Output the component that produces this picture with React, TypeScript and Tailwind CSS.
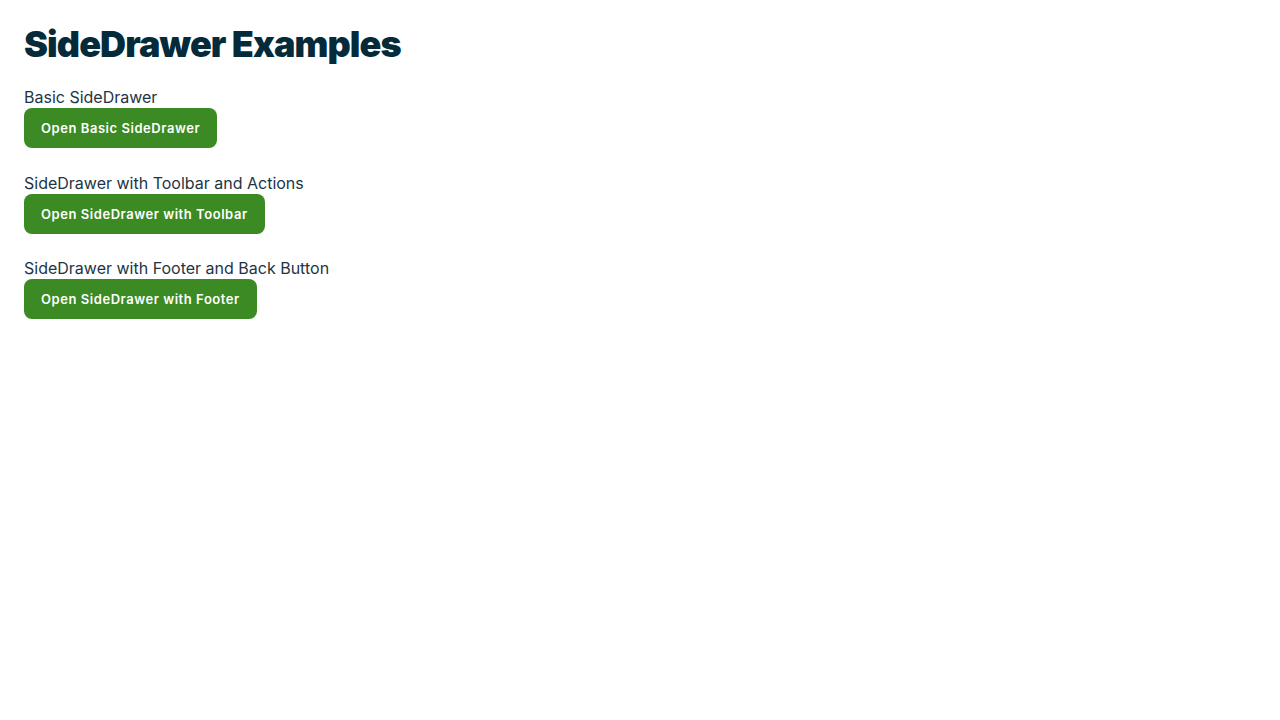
const examples = [
	{ label: "Basic SideDrawer", button: "Open Basic SideDrawer" },
	{ label: "SideDrawer with Toolbar and Actions", button: "Open SideDrawer with Toolbar" },
	{ label: "SideDrawer with Footer and Back Button", button: "Open SideDrawer with Footer" },
];

export default function App() {
	return (
		<div className="min-h-screen bg-white p-6 font-['Inter',sans-serif]">
			<h1 className="text-[36px] font-black leading-[40px] tracking-[-0.9px] text-[#052b3b]">SideDrawer Examples</h1>
			<div className="mt-[22px] flex flex-col gap-[23.5px]">
				{examples.map((example) => (
					<section key={example.label} className="flex flex-col items-start">
						<p className="text-[16px] leading-[22px] text-[#1d3545]">{example.label}</p>
						<button
							type="button"
							className="h-10 rounded-lg bg-[#3b8a24] px-[17px] pt-[2px] text-[13px] font-semibold tracking-[0.55px] text-white"
						>
							{example.button}
						</button>
					</section>
				))}
			</div>
		</div>
	);
}
